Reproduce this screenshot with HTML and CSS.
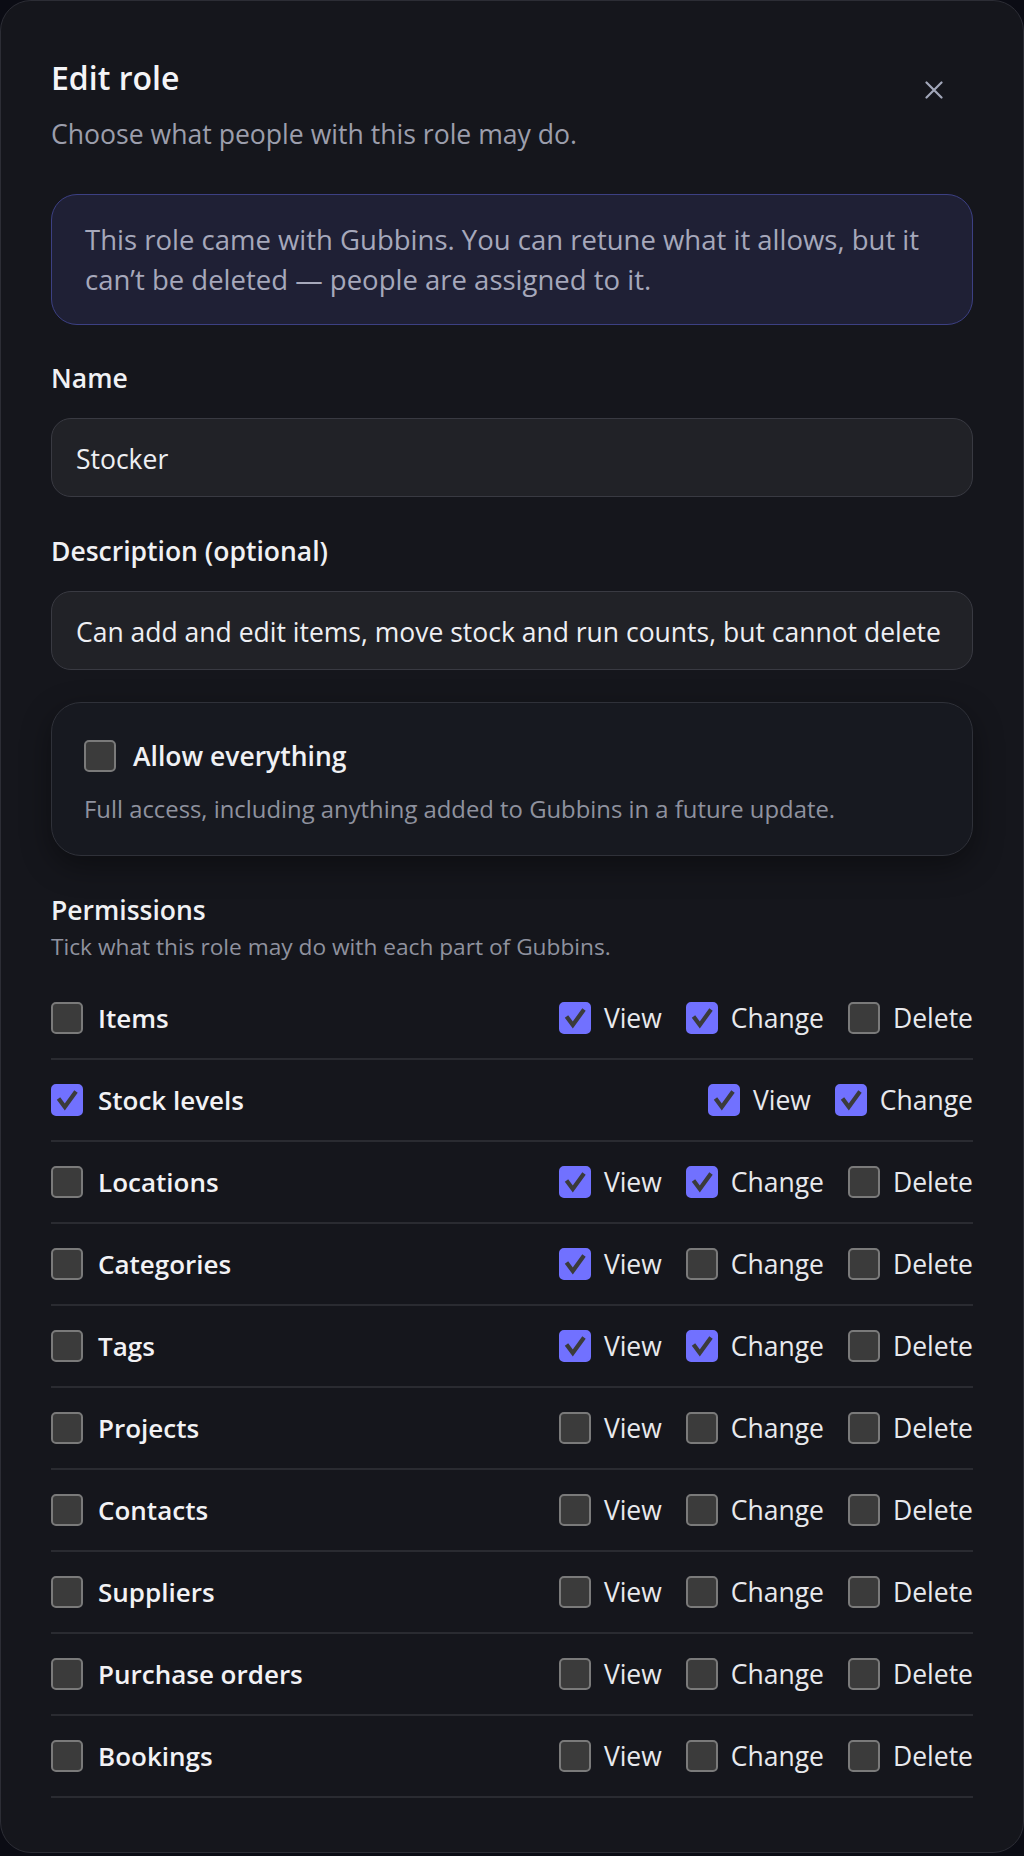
FILE: index.html
```html
<!DOCTYPE html>
<html lang="en">
<head>
<meta charset="utf-8">
<title>Edit role</title>
<link rel="stylesheet" href="styles.css">
</head>
<body>
<div class="dialog" role="dialog" aria-labelledby="dlg-title">
  <header class="dialog-head">
    <div class="dialog-heading">
      <h1 id="dlg-title" class="dialog-title">Edit role</h1>
      <p class="dialog-sub">Choose what people with this role may do.</p>
    </div>
    <button class="close-btn" type="button" aria-label="Close">
      <svg width="18" height="18" viewBox="0 0 18 18" aria-hidden="true">
        <path d="M1.5 1.5 L16.5 16.5 M16.5 1.5 L1.5 16.5" stroke="currentColor" stroke-width="2.2" stroke-linecap="round" fill="none"/>
      </svg>
    </button>
  </header>

  <div class="notice">This role came with Gubbins. You can retune what it allows, but it can’t be deleted — people are assigned to it.</div>

  <label class="field-label" for="role-name">Name</label>
  <input class="text-input" id="role-name" type="text" value="Stocker">

  <label class="field-label field-label--gap" for="role-desc">Description (optional)</label>
  <input class="text-input" id="role-desc" type="text" value="Can add and edit items, move stock and run counts, but cannot delete">

  <div class="allow-card">
    <label class="allow-row">
      <input class="cb-input" type="checkbox">
      <span class="cb" aria-hidden="true"><svg viewBox="2 2 28 28"><path d="M7.5 14.5 L13.8 23 L25 7.5"/></svg></span>
      <span class="allow-title">Allow everything</span>
    </label>
    <p class="allow-note">Full access, including anything added to Gubbins in a future update.</p>
  </div>

  <h2 class="perm-title">Permissions</h2>
  <p class="perm-sub">Tick what this role may do with each part of Gubbins.</p>

  <div class="perm-list">
    <div class="perm-row">
      <label class="perm-name"><input class="cb-input" type="checkbox"><span class="cb" aria-hidden="true"><svg viewBox="2 2 28 28"><path d="M7.5 14.5 L13.8 23 L25 7.5"/></svg></span><span>Items</span></label>
      <div class="perm-opts">
        <label class="opt"><input class="cb-input" type="checkbox" checked><span class="cb" aria-hidden="true"><svg viewBox="2 2 28 28"><path d="M7.5 14.5 L13.8 23 L25 7.5"/></svg></span><span>View</span></label>
        <label class="opt"><input class="cb-input" type="checkbox" checked><span class="cb" aria-hidden="true"><svg viewBox="2 2 28 28"><path d="M7.5 14.5 L13.8 23 L25 7.5"/></svg></span><span>Change</span></label>
        <label class="opt"><input class="cb-input" type="checkbox"><span class="cb" aria-hidden="true"><svg viewBox="2 2 28 28"><path d="M7.5 14.5 L13.8 23 L25 7.5"/></svg></span><span>Delete</span></label>
      </div>
    </div>
    <div class="perm-row">
      <label class="perm-name"><input class="cb-input" type="checkbox" checked><span class="cb" aria-hidden="true"><svg viewBox="2 2 28 28"><path d="M7.5 14.5 L13.8 23 L25 7.5"/></svg></span><span>Stock levels</span></label>
      <div class="perm-opts">
        <label class="opt"><input class="cb-input" type="checkbox" checked><span class="cb" aria-hidden="true"><svg viewBox="2 2 28 28"><path d="M7.5 14.5 L13.8 23 L25 7.5"/></svg></span><span>View</span></label>
        <label class="opt"><input class="cb-input" type="checkbox" checked><span class="cb" aria-hidden="true"><svg viewBox="2 2 28 28"><path d="M7.5 14.5 L13.8 23 L25 7.5"/></svg></span><span>Change</span></label>
      </div>
    </div>
    <div class="perm-row">
      <label class="perm-name"><input class="cb-input" type="checkbox"><span class="cb" aria-hidden="true"><svg viewBox="2 2 28 28"><path d="M7.5 14.5 L13.8 23 L25 7.5"/></svg></span><span>Locations</span></label>
      <div class="perm-opts">
        <label class="opt"><input class="cb-input" type="checkbox" checked><span class="cb" aria-hidden="true"><svg viewBox="2 2 28 28"><path d="M7.5 14.5 L13.8 23 L25 7.5"/></svg></span><span>View</span></label>
        <label class="opt"><input class="cb-input" type="checkbox" checked><span class="cb" aria-hidden="true"><svg viewBox="2 2 28 28"><path d="M7.5 14.5 L13.8 23 L25 7.5"/></svg></span><span>Change</span></label>
        <label class="opt"><input class="cb-input" type="checkbox"><span class="cb" aria-hidden="true"><svg viewBox="2 2 28 28"><path d="M7.5 14.5 L13.8 23 L25 7.5"/></svg></span><span>Delete</span></label>
      </div>
    </div>
    <div class="perm-row">
      <label class="perm-name"><input class="cb-input" type="checkbox"><span class="cb" aria-hidden="true"><svg viewBox="2 2 28 28"><path d="M7.5 14.5 L13.8 23 L25 7.5"/></svg></span><span>Categories</span></label>
      <div class="perm-opts">
        <label class="opt"><input class="cb-input" type="checkbox" checked><span class="cb" aria-hidden="true"><svg viewBox="2 2 28 28"><path d="M7.5 14.5 L13.8 23 L25 7.5"/></svg></span><span>View</span></label>
        <label class="opt"><input class="cb-input" type="checkbox"><span class="cb" aria-hidden="true"><svg viewBox="2 2 28 28"><path d="M7.5 14.5 L13.8 23 L25 7.5"/></svg></span><span>Change</span></label>
        <label class="opt"><input class="cb-input" type="checkbox"><span class="cb" aria-hidden="true"><svg viewBox="2 2 28 28"><path d="M7.5 14.5 L13.8 23 L25 7.5"/></svg></span><span>Delete</span></label>
      </div>
    </div>
    <div class="perm-row">
      <label class="perm-name"><input class="cb-input" type="checkbox"><span class="cb" aria-hidden="true"><svg viewBox="2 2 28 28"><path d="M7.5 14.5 L13.8 23 L25 7.5"/></svg></span><span>Tags</span></label>
      <div class="perm-opts">
        <label class="opt"><input class="cb-input" type="checkbox" checked><span class="cb" aria-hidden="true"><svg viewBox="2 2 28 28"><path d="M7.5 14.5 L13.8 23 L25 7.5"/></svg></span><span>View</span></label>
        <label class="opt"><input class="cb-input" type="checkbox" checked><span class="cb" aria-hidden="true"><svg viewBox="2 2 28 28"><path d="M7.5 14.5 L13.8 23 L25 7.5"/></svg></span><span>Change</span></label>
        <label class="opt"><input class="cb-input" type="checkbox"><span class="cb" aria-hidden="true"><svg viewBox="2 2 28 28"><path d="M7.5 14.5 L13.8 23 L25 7.5"/></svg></span><span>Delete</span></label>
      </div>
    </div>
    <div class="perm-row">
      <label class="perm-name"><input class="cb-input" type="checkbox"><span class="cb" aria-hidden="true"><svg viewBox="2 2 28 28"><path d="M7.5 14.5 L13.8 23 L25 7.5"/></svg></span><span>Projects</span></label>
      <div class="perm-opts">
        <label class="opt"><input class="cb-input" type="checkbox"><span class="cb" aria-hidden="true"><svg viewBox="2 2 28 28"><path d="M7.5 14.5 L13.8 23 L25 7.5"/></svg></span><span>View</span></label>
        <label class="opt"><input class="cb-input" type="checkbox"><span class="cb" aria-hidden="true"><svg viewBox="2 2 28 28"><path d="M7.5 14.5 L13.8 23 L25 7.5"/></svg></span><span>Change</span></label>
        <label class="opt"><input class="cb-input" type="checkbox"><span class="cb" aria-hidden="true"><svg viewBox="2 2 28 28"><path d="M7.5 14.5 L13.8 23 L25 7.5"/></svg></span><span>Delete</span></label>
      </div>
    </div>
    <div class="perm-row">
      <label class="perm-name"><input class="cb-input" type="checkbox"><span class="cb" aria-hidden="true"><svg viewBox="2 2 28 28"><path d="M7.5 14.5 L13.8 23 L25 7.5"/></svg></span><span>Contacts</span></label>
      <div class="perm-opts">
        <label class="opt"><input class="cb-input" type="checkbox"><span class="cb" aria-hidden="true"><svg viewBox="2 2 28 28"><path d="M7.5 14.5 L13.8 23 L25 7.5"/></svg></span><span>View</span></label>
        <label class="opt"><input class="cb-input" type="checkbox"><span class="cb" aria-hidden="true"><svg viewBox="2 2 28 28"><path d="M7.5 14.5 L13.8 23 L25 7.5"/></svg></span><span>Change</span></label>
        <label class="opt"><input class="cb-input" type="checkbox"><span class="cb" aria-hidden="true"><svg viewBox="2 2 28 28"><path d="M7.5 14.5 L13.8 23 L25 7.5"/></svg></span><span>Delete</span></label>
      </div>
    </div>
    <div class="perm-row">
      <label class="perm-name"><input class="cb-input" type="checkbox"><span class="cb" aria-hidden="true"><svg viewBox="2 2 28 28"><path d="M7.5 14.5 L13.8 23 L25 7.5"/></svg></span><span>Suppliers</span></label>
      <div class="perm-opts">
        <label class="opt"><input class="cb-input" type="checkbox"><span class="cb" aria-hidden="true"><svg viewBox="2 2 28 28"><path d="M7.5 14.5 L13.8 23 L25 7.5"/></svg></span><span>View</span></label>
        <label class="opt"><input class="cb-input" type="checkbox"><span class="cb" aria-hidden="true"><svg viewBox="2 2 28 28"><path d="M7.5 14.5 L13.8 23 L25 7.5"/></svg></span><span>Change</span></label>
        <label class="opt"><input class="cb-input" type="checkbox"><span class="cb" aria-hidden="true"><svg viewBox="2 2 28 28"><path d="M7.5 14.5 L13.8 23 L25 7.5"/></svg></span><span>Delete</span></label>
      </div>
    </div>
    <div class="perm-row">
      <label class="perm-name"><input class="cb-input" type="checkbox"><span class="cb" aria-hidden="true"><svg viewBox="2 2 28 28"><path d="M7.5 14.5 L13.8 23 L25 7.5"/></svg></span><span>Purchase orders</span></label>
      <div class="perm-opts">
        <label class="opt"><input class="cb-input" type="checkbox"><span class="cb" aria-hidden="true"><svg viewBox="2 2 28 28"><path d="M7.5 14.5 L13.8 23 L25 7.5"/></svg></span><span>View</span></label>
        <label class="opt"><input class="cb-input" type="checkbox"><span class="cb" aria-hidden="true"><svg viewBox="2 2 28 28"><path d="M7.5 14.5 L13.8 23 L25 7.5"/></svg></span><span>Change</span></label>
        <label class="opt"><input class="cb-input" type="checkbox"><span class="cb" aria-hidden="true"><svg viewBox="2 2 28 28"><path d="M7.5 14.5 L13.8 23 L25 7.5"/></svg></span><span>Delete</span></label>
      </div>
    </div>
    <div class="perm-row">
      <label class="perm-name"><input class="cb-input" type="checkbox"><span class="cb" aria-hidden="true"><svg viewBox="2 2 28 28"><path d="M7.5 14.5 L13.8 23 L25 7.5"/></svg></span><span>Bookings</span></label>
      <div class="perm-opts">
        <label class="opt"><input class="cb-input" type="checkbox"><span class="cb" aria-hidden="true"><svg viewBox="2 2 28 28"><path d="M7.5 14.5 L13.8 23 L25 7.5"/></svg></span><span>View</span></label>
        <label class="opt"><input class="cb-input" type="checkbox"><span class="cb" aria-hidden="true"><svg viewBox="2 2 28 28"><path d="M7.5 14.5 L13.8 23 L25 7.5"/></svg></span><span>Change</span></label>
        <label class="opt"><input class="cb-input" type="checkbox"><span class="cb" aria-hidden="true"><svg viewBox="2 2 28 28"><path d="M7.5 14.5 L13.8 23 L25 7.5"/></svg></span><span>Delete</span></label>
      </div>
    </div>
  </div>
</div>
</body>
</html>
```

FILE: styles.css
```css
:root {
  color-scheme: dark;
}

* {
  box-sizing: border-box;
}

body {
  margin: 0;
  background: #0b0c14;
  font-family: "Open Sans", "Noto Sans", sans-serif;
  color: #eeeff3;
}

/* Dialog shell */
.dialog {
  width: 1024px;
  background: #15161c;
  border: 1px solid #2c2d35;
  border-radius: 31px;
  padding: 57px 50px 54px;
}

.dialog-head {
  display: flex;
  justify-content: space-between;
  align-items: flex-start;
}

.dialog-title {
  margin: 0;
  font-size: 32px;
  line-height: 40px;
  font-weight: 600;
  color: #f4f4f7;
}

.dialog-sub {
  margin: 18px 0 0;
  font-size: 26.6px;
  line-height: 36px;
  color: #9c9eac;
}

.close-btn {
  width: 44px;
  height: 44px;
  margin: 10px 17px 0 0;
  padding: 0;
  border: 0;
  background: transparent;
  color: #a2a7b9;
  display: flex;
  align-items: center;
  justify-content: center;
  cursor: pointer;
}

/* Built-in role notice */
.notice {
  margin-top: 42px;
  padding: 25px 33px 24px;
  background: #1f2035;
  border: 1px solid #3c4083;
  border-radius: 26px;
  font-size: 27.5px;
  line-height: 40px;
  color: #a6a8bb;
}

/* Form fields */
.field-label {
  display: block;
  margin-top: 35px;
  font-size: 26.5px;
  line-height: 36px;
  font-weight: 600;
  color: #f0f1f4;
}

.field-label--gap {
  margin-top: 36px;
}

.text-input {
  display: block;
  width: 100%;
  height: 79px;
  margin-top: 22px;
  padding: 2px 24px 0;
  background: #212227;
  border: 1px solid #393a42;
  border-radius: 20px;
  font-family: inherit;
  font-size: 26.5px;
  color: #eeeff3;
  outline: none;
}

/* Checkbox: the real input stays in the label for state and focus,
   the square next to it is what gets painted */
.cb-input {
  position: absolute;
  width: 1px;
  height: 1px;
  margin: 0;
  opacity: 0;
  pointer-events: none;
}

.cb {
  flex: none;
  width: 32px;
  height: 32px;
  border: 2px solid #7a7a7a;
  border-radius: 5px;
  background: #3b3b3b;
  display: flex;
  align-items: center;
  justify-content: center;
}

.cb svg {
  display: none;
  width: 28px;
  height: 28px;
  fill: none;
  stroke: #3b3b3b;
  stroke-width: 4.2;
  stroke-linejoin: miter;
  stroke-linecap: butt;
}

.cb-input:checked + .cb {
  background: #7171ff;
  border-color: #7171ff;
}

.cb-input:checked + .cb svg {
  display: block;
}

/* "Allow everything" card */
.allow-card {
  margin-top: 32px;
  padding: 35px 32px 30px;
  background: #171920;
  border: 1px solid #2f3139;
  border-radius: 30px;
  box-shadow: 0 10px 30px rgba(0, 0, 0, 0.38);
}

.allow-row {
  position: relative;
  display: flex;
  align-items: center;
  gap: 17px;
}

.allow-title {
  font-size: 26.5px;
  line-height: 36px;
  font-weight: 600;
  color: #f0f1f4;
}

.allow-note {
  margin: 19px 0 0;
  font-size: 23.85px;
  line-height: 32px;
  color: #8f929f;
}

/* Permissions matrix */
.perm-title {
  margin: 36px 0 0;
  font-size: 26.5px;
  line-height: 36px;
  font-weight: 600;
  color: #f0f1f4;
}

.perm-sub {
  margin: 4px 0 0;
  font-size: 22.7px;
  line-height: 30px;
  color: #8f929f;
}

.perm-list {
  margin-top: 16px;
}

.perm-row {
  display: flex;
  justify-content: space-between;
  align-items: center;
  height: 82px;
  border-bottom: 2px solid #2a2b31;
}

.perm-name {
  position: relative;
  display: flex;
  align-items: center;
  gap: 15px;
  font-size: 26px;
  line-height: 36px;
  font-weight: 600;
  color: #f2f2f5;
}

.perm-opts {
  display: flex;
  align-items: center;
  gap: 24px;
}

.opt {
  position: relative;
  display: flex;
  align-items: center;
  gap: 13px;
  font-size: 26.5px;
  line-height: 36px;
  color: #e8e9ed;
}
```
